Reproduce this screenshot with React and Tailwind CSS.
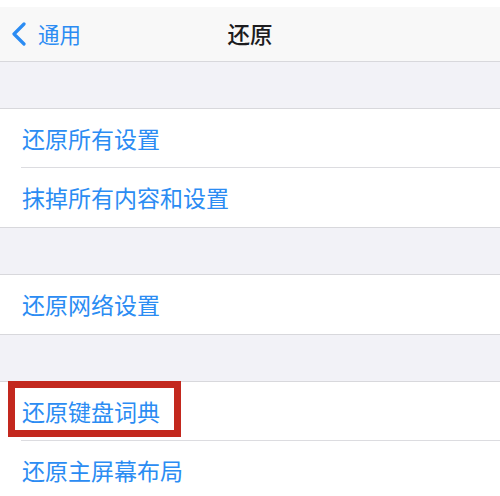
const font = { fontFamily: '"Noto Sans CJK SC", "Noto Sans", sans-serif' };

function Row({ label, separator = true, highlight = false }) {
  return (
    <div className="relative h-[59px] bg-white">
      <div className="flex h-full items-center pl-[22px] text-[23px] text-[#2b8cf3]">
        {label}
      </div>
      {separator && <div className="absolute bottom-0 left-[21px] right-0 h-px bg-[#dcdce0]" />}
      {highlight && (
        <div className="absolute left-[8px] top-[-1px] h-[56px] w-[173px] border-[7px] border-[#c3281e]" />
      )}
    </div>
  );
}

function Gap() {
  return <div className="h-[48px] border-y border-[#d8d8dc] bg-[#f2f2f7]" />;
}

export default function App() {
  return (
    <div className="h-[496px] w-[500px] overflow-hidden bg-white" style={font}>
      <div className="h-[7px] bg-white" />
      <div className="relative flex h-[54px] items-center justify-center bg-[#f8f8f8]">
        <div className="absolute left-[10px] flex items-center gap-[8px] text-[#2b8cf3]">
          <svg width="20" height="24" viewBox="0 0 20 24" fill="none">
            <path d="M14 2 L4 12 L14 22" stroke="#2b8cf3" strokeWidth="3.2" strokeLinecap="round" strokeLinejoin="round" />
          </svg>
          <span className="text-[21.5px] leading-none">通用</span>
        </div>
        <span className="text-[22.5px] font-medium text-[#1c1c1e]">还原</span>
      </div>
      <Gap />
      <Row label="还原所有设置" />
      <Row label="抹掉所有内容和设置" separator={false} />
      <Gap />
      <Row label="还原网络设置" separator={false} />
      <Gap />
      <Row label="还原键盘词典" highlight />
      <Row label="还原主屏幕布局" separator={false} />
    </div>
  );
}
